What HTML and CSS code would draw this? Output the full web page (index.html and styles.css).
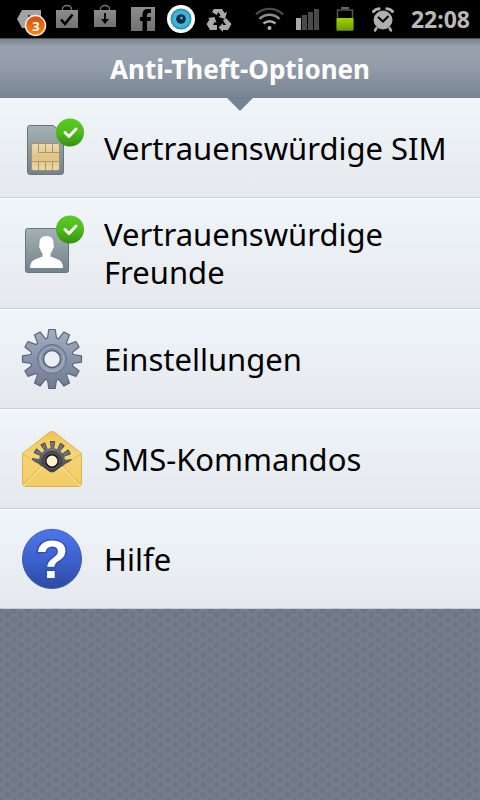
FILE: index.html
```
<!DOCTYPE html>
<html lang="de">
  <head>
    <meta charset="UTF-8" />
    <meta name="viewport" content="width=device-width, initial-scale=1.0" />
    <title>Anti-Theft-Optionen</title>
    <link rel="stylesheet" href="styles.css">
  </head>
  <body>
    <div class="statusbar">
      <div class="notifications">
        <!-- message tag with counter -->
        <svg class="status-icon" viewBox="0 0 38 38">
          <path d="M7 19L12 10H31V28H12Z" fill="#a3a3a3" />
          <circle cx="19" cy="16" r="1" fill="#111" />
          <circle cx="24" cy="16" r="1" fill="#111" />
          <circle cx="25.500" cy="25.500" r="10" fill="url(#orange)" stroke="#f3e9e2" stroke-width="1.500" />
          <text class="counter" x="26" y="30.500" text-anchor="middle">3</text>
        </svg>
        <!-- bag with tick -->
        <svg class="status-icon" viewBox="0 0 38 38">
          <path d="M14.500 10V9a4.500 3.500 0 0 1 9 0V10" fill="none" stroke="#777" stroke-width="1.300" />
          <rect x="8" y="10" width="22" height="18" fill="url(#gray)" />
          <path d="M13 19.500L17 24L24.500 14.500" fill="none" stroke="#000" stroke-width="2.600" />
        </svg>
        <!-- bag with arrow -->
        <svg class="status-icon" viewBox="0 0 38 38">
          <path d="M14.500 10V9a4.500 3.500 0 0 1 9 0V10" fill="none" stroke="#777" stroke-width="1.300" />
          <rect x="8" y="10" width="22" height="17" fill="url(#gray)" />
          <path d="M19 13V20" stroke="#000" stroke-width="1.800" />
          <path d="M15 19H23L19 24Z" fill="#000" />
        </svg>
        <!-- facebook -->
        <svg class="status-icon" viewBox="0 0 38 38">
          <rect x="7" y="7" width="24" height="24" fill="url(#gray)" />
          <path d="M18.500 31V21H16V17H18.500V14.500Q18.500 9 23.500 9H27V13H25Q23 13 23 15V17H27L26.500 21H23V31Z" fill="#000" />
        </svg>
        <!-- eye -->
        <svg class="status-icon" viewBox="0 0 38 38">
          <circle cx="19" cy="19" r="14" fill="#fff" />
          <circle cx="19" cy="19" r="10.500" fill="url(#iris)" />
          <circle cx="19" cy="19" r="4.800" fill="#0b2a44" />
          <circle cx="19.500" cy="18" r="1.500" fill="#5aa5c4" />
        </svg>
        <!-- recycle -->
        <svg class="status-icon" viewBox="0 0 38 38">
          <g fill="#a9a9a9">
            <path d="M14 9H22L24.500 13L27 12L25 19L18.500 17L20.500 15.500L18.500 12L16.500 15L12 12Z" />
            <path d="M26 18L31.500 24L28 30H23V32L18.500 27.500L23 23V25H26L23 20.500Z" />
            <path d="M8 18L14.500 17L16.500 23L14.500 22L13 25H17V30H10L6.500 24L9.500 19.500Z" />
          </g>
        </svg>
      </div>
      <div class="system">
        <!-- wifi -->
        <svg class="status-icon" viewBox="0 0 38 38" fill="none" stroke-width="2.400">
          <path d="M5 14.500A19 19 0 0 1 32 14.500" stroke="#4b4b4b" />
          <path d="M8.500 19A14 14 0 0 1 28.500 19" stroke="#8e8e8e" />
          <path d="M12.500 23.500A9 9 0 0 1 24.500 23.500" stroke="#a9a9a9" />
          <circle cx="18.500" cy="28" r="2" fill="#b5b5b5" />
        </svg>
        <!-- signal -->
        <svg class="status-icon" viewBox="0 0 38 38" fill="#4a4a4a">
          <rect x="7" y="18" width="5" height="12" fill="#a9a9a9" />
          <rect x="13" y="15" width="5" height="15" />
          <rect x="19" y="12" width="5" height="18" />
          <rect x="25" y="9" width="5" height="21" />
        </svg>
        <!-- battery -->
        <svg class="status-icon" viewBox="0 0 38 38">
          <path d="M15 9V8H21V9" fill="none" stroke="#666" stroke-width="2" />
          <rect x="10.500" y="10" width="15" height="20" fill="none" stroke="#555" stroke-width="1.500" />
          <rect x="9.500" y="18" width="17" height="12.500" rx="1" fill="url(#charge)" />
        </svg>
        <!-- alarm clock -->
        <svg class="status-icon" viewBox="0 0 38 38">
          <g fill="#b0b0b0" stroke="#b0b0b0">
            <circle cx="18" cy="20" r="9" />
            <path d="M8.500 11.500Q10.500 9 14 8.800" stroke-width="3" stroke-linecap="round" fill="none" />
            <path d="M22 8.800Q25.500 9 27.500 11.500" stroke-width="3" stroke-linecap="round" fill="none" />
            <path d="M11.500 28L10 30.500M24.500 28L26 30.500" stroke-width="2.500" stroke-linecap="round" />
          </g>
          <path d="M13 17L18 21.500L23.500 16" fill="none" stroke="#000" stroke-width="2" />
        </svg>
        <span class="clock">22:08</span>
      </div>
    </div>

    <header class="titlebar">
      <h1>Anti-Theft-Optionen</h1>
    </header>

    <nav class="menu">
      <a class="item" href="#sim">
        <svg class="icon" viewBox="0 0 64 64">
          <path d="M10 9.500H33L43.500 17V56Q43.500 58.500 41 58.500H10Q7.500 58.500 7.500 56V12Q7.500 9.500 10 9.500Z" fill="url(#slate)" stroke="#68767c" />
          <rect x="11.500" y="27.500" width="28" height="27" rx="2" fill="url(#chip)" stroke="#a98f6f" />
          <path d="M18.500 28V36.500H39M25.500 28V36M32.500 28V36M12 45.500H39M18.500 46V54M25.500 46V54M32.500 46V54" fill="none" stroke="#b29463" />
          <use href="#tick" y="3" />
        </svg>
        <span class="label">Vertrauenswürdige SIM</span>
      </a>
      <a class="item" href="#freunde">
        <svg class="icon" viewBox="0 0 64 64">
          <rect x="5.500" y="12.500" width="43" height="44" rx="2" fill="url(#slate)" stroke="#68767c" />
          <path d="M10 52Q10 45 16 43L22.500 40.500V37.500Q20.500 35 20 32.500Q18.500 31 19.500 28Q19 20 26.500 20Q34 20 33.500 28Q34.500 31 33 32.500Q32.500 35 30.500 37.500V40.500L37 43Q43 45 43 52Z" fill="#fff" />
          <use href="#tick" />
        </svg>
        <span class="label">Vertrauenswürdige Freunde</span>
      </a>
      <a class="item" href="#einstellungen">
        <svg class="icon" viewBox="0 0 64 64">
          <g transform="translate(32 32)">
            <use href="#gear" fill="url(#steel)" stroke="#5a6478" stroke-width="1.200" />
            <circle r="14.500" fill="url(#ring)" stroke="#626e85" />
            <circle r="12" fill="none" stroke="#a4afc1" stroke-width="1" />
            <circle r="8.500" fill="#ebeff3" stroke="#555f70" stroke-width="1.500" />
          </g>
        </svg>
        <span class="label">Einstellungen</span>
      </a>
      <a class="item" href="#sms">
        <svg class="icon" viewBox="0 0 64 64">
          <path d="M2.500 26.500L29 5.500Q32 3.500 35 5.500L61.500 26.500V56Q61.500 59.500 58 59.500H6Q2.500 59.500 2.500 56Z" fill="url(#paper)" stroke="#e0b34d" />
          <path d="M3 27L22 39.500M61 27L42 39.500" fill="none" stroke="#e9bd58" />
          <path d="M4 58L22 39.500L32 45.500L42 39.500L60 58" fill="none" stroke="#fbe7a6" stroke-width="1.500" />
          <path d="M4 57L22 38.500M60 57L42 38.500" fill="none" stroke="#dca941" stroke-width="1" />
          <g clip-path="url(#flap)">
            <!-- upper half of a gear, tucked in the flap -->
            <g transform="translate(32 34)" stroke="#46484c">
              <circle r="16" fill="none" stroke-width="8" stroke-dasharray="4.400 3.978" stroke-dashoffset="2.200" />
              <circle r="16" fill="none" stroke="#707378" stroke-width="6" stroke-dasharray="2.800 5.578" stroke-dashoffset="1.400" />
              <path d="M-13 0A13 13 0 0 1 13 0L20-2L0 13L-20-2Z" fill="url(#dark)" stroke="none" />
              <circle r="9.500" fill="#505256" stroke="#36383c" />
              <circle r="6.200" fill="#fff2d0" stroke="#17181a" stroke-width="1.500" />
            </g>
          </g>
        </svg>
        <span class="label">SMS-Kommandos</span>
      </a>
      <a class="item" href="#hilfe">
        <svg class="icon" viewBox="0 0 64 64">
          <circle cx="32" cy="31" r="30" fill="#dfe1e6" />
          <circle cx="32" cy="32" r="29.500" fill="url(#blue)" stroke="#3c5bb0" />
          <text class="question" x="32" y="51" text-anchor="middle">?</text>
        </svg>
        <span class="label">Hilfe</span>
      </a>
    </nav>

    <!-- shared shapes and gradients -->
    <svg class="defs" width="0" height="0" aria-hidden="true">
      <defs>
        <path id="gear" stroke-linejoin="round" d="M-4.500-21L-3.200-29.500H3.200L4.500-21L6.600-20.400L12-27.100L17.500-23.900L14.400-15.900L15.900-14.400L23.900-17.500L27.100-12L20.400-6.600L21-4.500L29.500-3.200V3.200L21 4.500L20.400 6.600L27.100 12L23.900 17.500L15.900 14.400L14.400 15.900L17.500 23.900L12 27.100L6.600 20.400L4.500 21L3.200 29.500H-3.200L-4.500 21L-6.600 20.400L-12 27.100L-17.500 23.900L-14.400 15.900L-15.900 14.400L-23.900 17.500L-27.100 12L-20.400 6.600L-21 4.500L-29.500 3.200V-3.200L-21-4.500L-20.400-6.600L-27.100-12L-23.900-17.500L-15.900-14.400L-14.400-15.900L-17.500-23.900L-12-27.100L-6.600-20.400Z" />
        <g id="tick">
          <circle cx="50" cy="13.500" r="14" fill="url(#green)" />
          <path d="M45 13.500L49 17.500L56 10" fill="none" stroke="#fff" stroke-width="3" stroke-linecap="round" stroke-linejoin="round" />
        </g>
        <clipPath id="flap"><path d="M8 8H56V30L35 44.500Q32 46.500 29 44.500L8 30Z" /></clipPath>
        <linearGradient id="orange" x2="0" y2="1"><stop stop-color="#d9480a" /><stop offset="1" stop-color="#f58a12" /></linearGradient>
        <linearGradient id="gray" x2="0" y2="1"><stop stop-color="#8d8d8d" /><stop offset="1" stop-color="#717171" /></linearGradient>
        <radialGradient id="iris"><stop offset=".4" stop-color="#4fb9d8" /><stop offset=".75" stop-color="#3bb3d4" /><stop offset="1" stop-color="#1c86ab" /></radialGradient>
        <linearGradient id="charge" x2="0" y2="1"><stop stop-color="#9fd400" /><stop offset="1" stop-color="#6f9c00" /></linearGradient>
        <linearGradient id="slate" x2="0" y2="1"><stop stop-color="#a5b1b3" /><stop offset="1" stop-color="#71838b" /></linearGradient>
        <linearGradient id="chip" x2="0" y2="1"><stop stop-color="#efdcae" /><stop offset=".5" stop-color="#dcc287" /><stop offset="1" stop-color="#ecd8a8" /></linearGradient>
        <linearGradient id="green" x2="0" y2="1"><stop stop-color="#5bcb22" /><stop offset=".5" stop-color="#4dbb1b" /><stop offset="1" stop-color="#3a8e12" /></linearGradient>
        <linearGradient id="steel" x2="0" y2="1"><stop stop-color="#a2aec4" /><stop offset="1" stop-color="#6f7a90" /></linearGradient>
        <linearGradient id="ring" x2="0" y2="1"><stop stop-color="#7d89a0" /><stop offset="1" stop-color="#97a3b7" /></linearGradient>
        <linearGradient id="dark" x2="0" y2="1"><stop stop-color="#707378" /><stop offset="1" stop-color="#3f4146" /></linearGradient>
        <linearGradient id="paper" x2="0" y2="1"><stop stop-color="#efc355" /><stop offset=".4" stop-color="#f6d477" /><stop offset="1" stop-color="#f2cb63" /></linearGradient>
        <linearGradient id="blue" x2="0" y2="1"><stop stop-color="#4c77ea" /><stop offset=".5" stop-color="#3d62cf" /><stop offset="1" stop-color="#2c4aa2" /></linearGradient>
      </defs>
    </svg>
  </body>
</html>
```
FILE: styles.css
```
* {
  margin: 0;
  padding: 0;
  box-sizing: border-box;
}

body {
  min-height: 100vh;
  font-family: "Noto Sans", "Open Sans", sans-serif;
  background-color: #787f8c;
  background-image:
    radial-gradient(circle at 7px 5px, #6e7687 3px, transparent 4px),
    radial-gradient(circle at 7px 5px, #6e7687 3px, transparent 4px);
  background-size: 14px 10px;
  background-position: 0 0, 7px 5px;
}

.statusbar {
  display: flex;
  justify-content: space-between;
  height: 39px;
  padding: 0 10px;
  background: #000;
  border-bottom: 1px solid #4f5358;
}

.notifications,
.system {
  display: flex;
  align-items: center;
}

.status-icon {
  width: 38px;
  height: 38px;
}

.counter {
  font-size: 13px;
  font-weight: bold;
  fill: #fff;
}

.clock {
  margin-left: 8px;
  font-size: 23px;
  font-weight: bold;
  color: #b9b9b9;
}

.titlebar {
  position: relative;
  height: 59px;
  background: linear-gradient(#7b848c, #98a3ae 8px, #959fab 24px, #7a8593);
  border-bottom: 1px solid #7f8197;
  text-align: center;
}

.titlebar::after {
  content: "";
  position: absolute;
  top: 100%;
  left: 50%;
  width: 28px;
  height: 14px;
  transform: translateX(-50%);
  background: #778391;
  clip-path: polygon(0 0, 100% 0, 50% 100%);
}

h1 {
  font-size: 26px;
  line-height: 60px;
  color: #fff;
}

.item {
  display: flex;
  gap: 20px;
  min-height: 100px;
  padding: 0 20px;
  background: linear-gradient(#f0f5fa, #e5e9ed);
  border-bottom: 1px solid #c5cedb;
  color: #000;
  text-decoration: none;
}

.item + .item {
  box-shadow: inset 0 1px #fafcfe;
}

.icon {
  flex: none;
  width: 64px;
  height: 64px;
  margin-top: 18px;
  overflow: visible;
}

.label {
  align-self: center;
  padding: 17px 0;
  font-size: 31px;
  line-height: 38px;
}

.question {
  font-family: "Liberation Sans", Arial, sans-serif;
  font-size: 54px;
  font-weight: bold;
  fill: #fff;
  stroke: #2f50b4;
  stroke-width: 3px;
  paint-order: stroke;
}

.defs {
  position: absolute;
}
```
